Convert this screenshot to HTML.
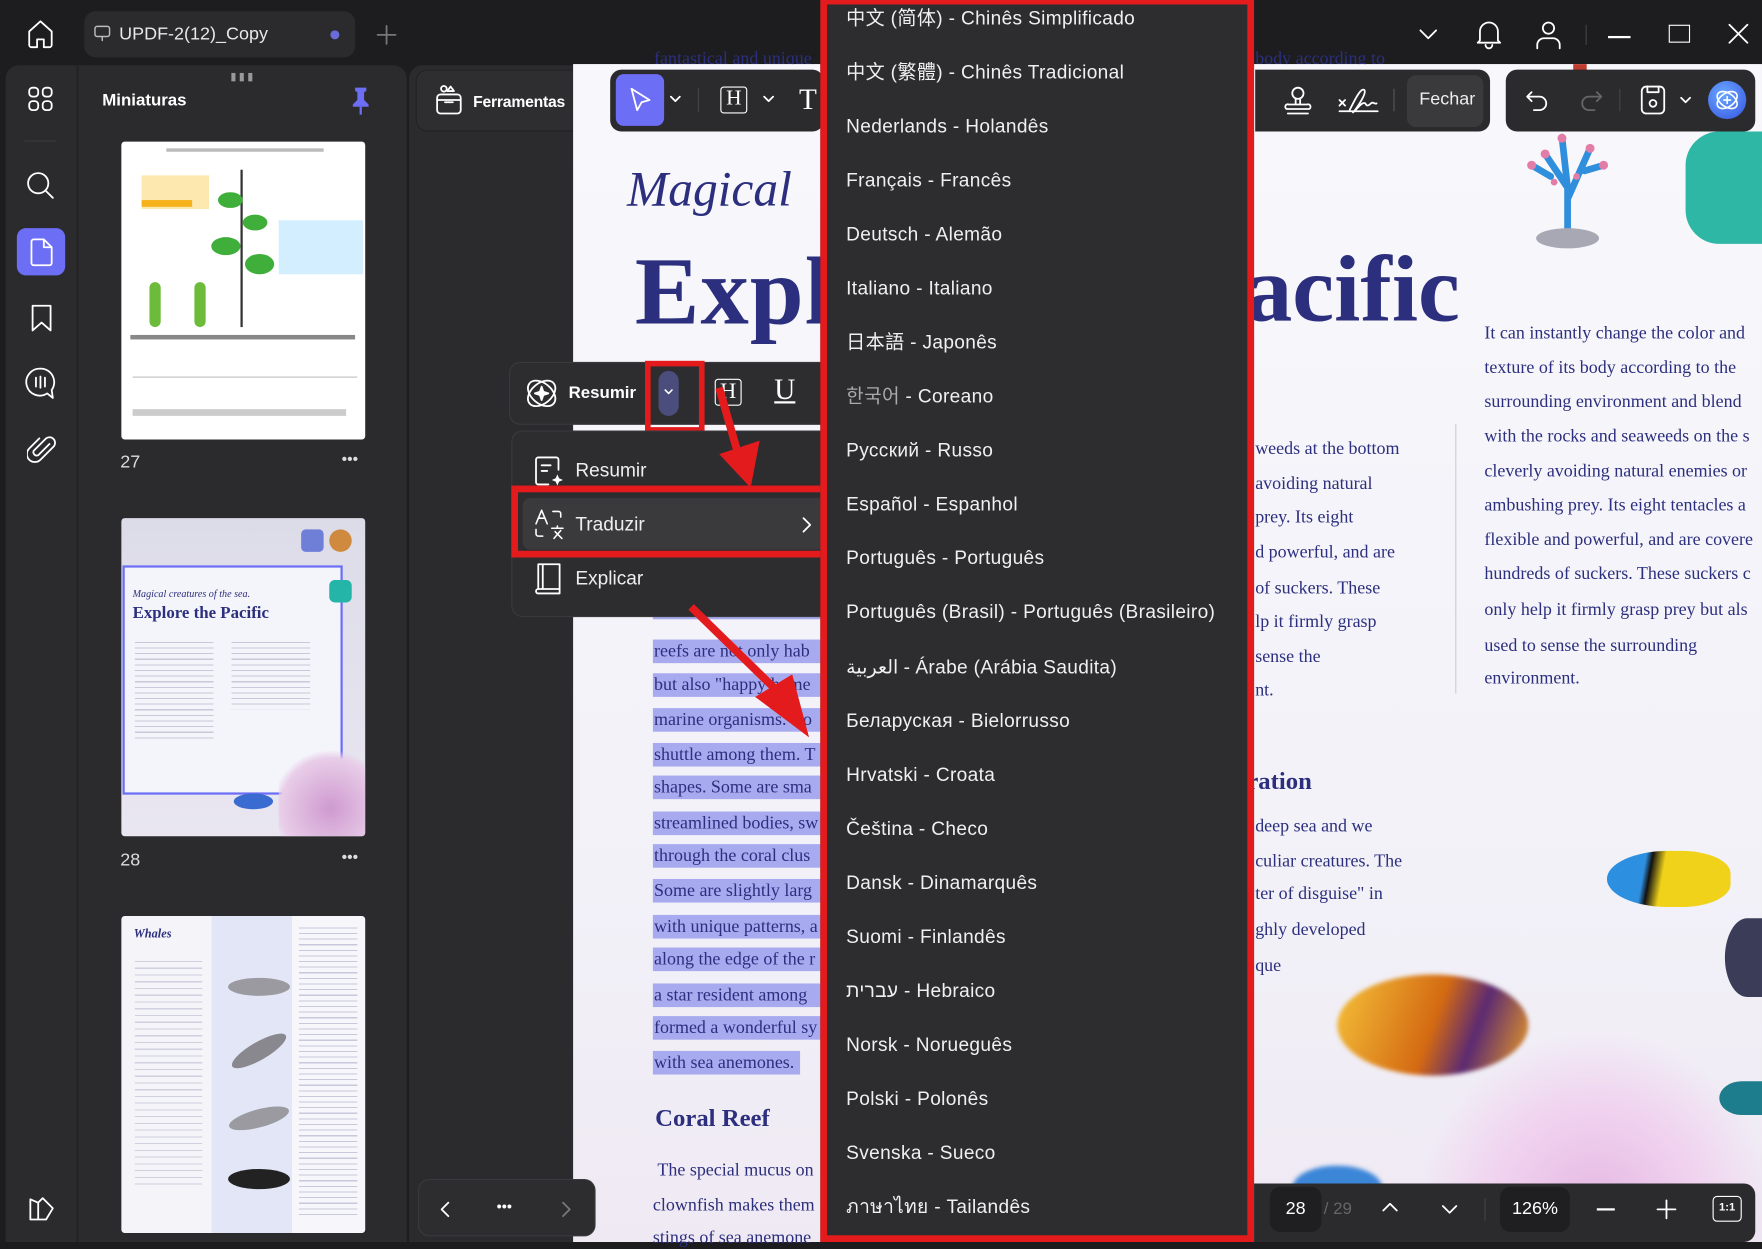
<!DOCTYPE html>
<html><head><meta charset="utf-8"><style>
*{margin:0;padding:0;box-sizing:border-box}
html,body{width:1762px;height:1242px;overflow:hidden;background:#1c1c1e}
#w{position:absolute;left:0;top:0;width:1568px;height:1105px;transform-origin:0 0;transform:scale(1.12372,1.12398);background:#1d1d1f;font-family:"Liberation Sans","Noto Sans CJK SC",sans-serif;color:#fff}
.a{position:absolute}
.ic{position:absolute;fill:none;stroke:#fff;stroke-width:1.6;stroke-linecap:round;stroke-linejoin:round}
.doc{font-family:"Liberation Serif",serif;color:#2c2f7e}
.sl{position:absolute;left:581px;height:21px;background:#a8aaf0;font-size:16px;line-height:21px;white-space:nowrap;overflow:hidden;font-family:"Liberation Serif",serif;color:#2c2f7e;padding-left:1px}
.rt{position:absolute;font-family:"Liberation Serif",serif;color:#2c2f7e;font-size:16px;white-space:nowrap}
.lang{position:absolute;left:753px;font-size:17px;line-height:22px;height:22px;color:#f0f0f0;white-space:nowrap;letter-spacing:.3px}
.mi{position:absolute;font-size:17px;color:#eee}
</style></head><body><div id="w">

<!-- top bar -->
<svg class="ic" style="left:22px;top:16px" width="28" height="28" viewBox="0 0 28 28"><path d="M4 12L14 3l10 9v12a2 2 0 0 1-2 2h-5v-7h-6v7H6a2 2 0 0 1-2-2z"/></svg>
<div class="a" style="left:75px;top:10px;width:241px;height:41px;background:#2b2b2e;border-radius:10px"></div>
<svg class="ic" style="left:83px;top:22px;stroke:#bbb;stroke-width:1.3" width="16" height="16" viewBox="0 0 16 16"><rect x="1.5" y="1.5" width="13" height="9" rx="2"/><path d="M8 11v3"/></svg>
<div class="a" style="left:106px;top:22px;font-size:16px;color:#e8e8e8">UPDF-2(12)_Copy</div>
<div class="a" style="left:294px;top:27px;width:8px;height:8px;border-radius:50%;background:#6a6cd8"></div>
<svg class="ic" style="left:335px;top:22px;stroke:#777" width="18" height="18" viewBox="0 0 18 18"><path d="M9 1v16M1 9h16"/></svg>
<svg class="ic" style="left:1262px;top:23px" width="18" height="14" viewBox="0 0 18 14"><path d="M2 4l7 7 7-7"/></svg>
<svg class="ic" style="left:1313px;top:17px" width="24" height="27" viewBox="0 0 24 27"><path d="M4 19V11a8 8 0 0 1 16 0v8l2 2H2z M9 23a3 3 0 0 0 6 0"/></svg>
<svg class="ic" style="left:1366px;top:17px" width="24" height="28" viewBox="0 0 24 28"><circle cx="12" cy="8" r="5"/><path d="M2 26v-3a6 6 0 0 1 6-6h8a6 6 0 0 1 6 6v3"/></svg>
<div class="a" style="left:1411px;top:22px;width:1px;height:18px;background:#444"></div>
<div class="a" style="left:1431px;top:32px;width:20px;height:1.6px;background:#fff"></div>
<div class="a" style="left:1485px;top:22px;width:19px;height:16px;border:1.6px solid #fff"></div>
<svg class="ic" style="left:1538px;top:21px" width="18" height="18" viewBox="0 0 18 18"><path d="M1 1l16 16M17 1L1 17"/></svg>

<!-- left panel -->
<div class="a" style="left:5px;top:58px;width:357px;height:1047px;background:#2b2b2d;border-radius:12px 12px 0 0"></div>
<div class="a" style="left:68px;top:58px;width:2px;height:1047px;background:#232325"></div>
<div class="a" style="left:205px;top:63px;font-size:10px;color:#999;letter-spacing:2px">▮▮▮</div>
<svg class="ic" style="left:24px;top:76px" width="24" height="24" viewBox="0 0 24 24"><rect x="2" y="2" width="8" height="8" rx="3"/><rect x="14" y="2" width="8" height="8" rx="3"/><rect x="2" y="14" width="8" height="8" rx="3"/><rect x="14" y="14" width="8" height="8" rx="3"/></svg>
<div class="a" style="left:22px;top:125px;width:28px;height:1px;background:#3b3b3d"></div>
<svg class="ic" style="left:23px;top:152px" width="26" height="26" viewBox="0 0 26 26"><circle cx="11" cy="11" r="9"/><path d="M18 18l6 6"/></svg>
<div class="a" style="left:15px;top:203px;width:43px;height:42px;background:#6c6ef5;border-radius:8px"></div>
<svg class="ic" style="left:25px;top:211px" width="24" height="27" viewBox="0 0 24 27"><path d="M5 2h9l7 7v14a2 2 0 0 1-2 2H5a2 2 0 0 1-2-2V4a2 2 0 0 1 2-2z M14 2v7h7"/></svg>
<svg class="ic" style="left:26px;top:270px" width="22" height="26" viewBox="0 0 22 26"><path d="M3 2h16v22l-8-7-8 7z"/></svg>
<svg class="ic" style="left:22px;top:326px" width="28" height="30" viewBox="0 0 28 30"><path d="M14 2a12 12 0 1 0 6 22l5 4-1-7A12 12 0 0 0 14 2z M10 10v8M14 9v10M18 10v8"/></svg>
<svg class="ic" style="left:24px;top:385px" width="26" height="30" viewBox="0 0 26 30"><path d="M20 10L10 20a3 3 0 0 1-4-4L17 5a5 5 0 0 1 7 7L12 24a7 7 0 0 1-10-10l9-9"/></svg>
<svg class="ic" style="left:24px;top:1063px" width="26" height="26" viewBox="0 0 26 26"><path d="M3 22V4l7 3 4-4 9 9-6 10z M10 7v15"/></svg>

<div class="a" style="left:91px;top:81px;font-size:15px;font-weight:bold">Miniaturas</div>
<svg class="a" style="left:312px;top:77px" width="18" height="26" viewBox="0 0 18 26"><path d="M4 1h10v3l-2 1v7l4 4v2H2v-2l4-4V5L4 4z" fill="#6c6ef5"/><path d="M9 18v7" stroke="#6c6ef5" stroke-width="2"/></svg>

<!-- thumbnails -->
<div class="a" style="left:108px;top:126px;width:217px;height:265px;background:#fff;border-radius:3px;overflow:hidden">
 <div class="a" style="left:40px;top:6px;width:140px;height:3px;background:#bbb"></div>
 <div class="a" style="left:18px;top:30px;width:60px;height:30px;background:#fde9b0"></div>
 <div class="a" style="left:18px;top:52px;width:45px;height:6px;background:#f6b21a"></div>
 <div class="a" style="left:140px;top:70px;width:75px;height:48px;background:#d3efff"></div>
 <div class="a" style="left:106px;top:25px;width:2px;height:140px;background:#333"></div>
 <div class="a" style="left:86px;top:45px;width:22px;height:14px;background:#3fae3a;border-radius:50%"></div>
 <div class="a" style="left:108px;top:65px;width:22px;height:14px;background:#3fae3a;border-radius:50%"></div>
 <div class="a" style="left:80px;top:85px;width:26px;height:16px;background:#3fae3a;border-radius:50%"></div>
 <div class="a" style="left:110px;top:100px;width:26px;height:18px;background:#3fae3a;border-radius:50%"></div>
 <div class="a" style="left:25px;top:125px;width:10px;height:40px;background:#6dbb3a;border-radius:5px"></div>
 <div class="a" style="left:65px;top:125px;width:10px;height:40px;background:#6dbb3a;border-radius:5px"></div>
 <div class="a" style="left:8px;top:172px;width:200px;height:4px;background:#888"></div>
 <div class="a" style="left:10px;top:185px;width:200px;height:25px;border-bottom:1px solid #999;opacity:.6"></div>
 <div class="a" style="left:10px;top:238px;width:190px;height:6px;background:#ccc"></div>
</div>
<div class="a" style="left:107px;top:403px;font-size:16px;color:#ddd">27</div>
<div class="a" style="left:304px;top:400px;font-size:14px;color:#ddd">•••</div>

<div class="a" style="left:108px;top:461px;width:217px;height:283px;background:linear-gradient(180deg,#dcdce8,#e9e6f1);border-radius:3px;overflow:hidden">
 <div class="a" style="left:1px;top:42px;width:196px;height:204px;border:2px solid #6c6ef5;background:#f4f4fb"></div>
 <div class="a doc" style="left:10px;top:62px;font-size:9px;font-style:italic">Magical creatures of the sea.</div>
 <div class="a doc" style="left:10px;top:77px;font-size:15px;font-weight:bold">Explore the Pacific</div>
 <div class="a" style="left:12px;top:110px;width:70px;height:90px;background:repeating-linear-gradient(#c9c9da 0 1px,transparent 1px 5px)"></div>
 <div class="a" style="left:98px;top:110px;width:70px;height:60px;background:repeating-linear-gradient(#c9c9da 0 1px,transparent 1px 5px)"></div>
 <div class="a" style="left:140px;top:200px;width:77px;height:83px;background:radial-gradient(circle at 60% 70%,#cf9ad0,#e8cde8 60%,transparent 70%)"></div>
 <div class="a" style="left:160px;top:10px;width:20px;height:20px;background:#6f7fd8;border-radius:4px"></div>
 <div class="a" style="left:185px;top:10px;width:20px;height:20px;background:#d08a40;border-radius:50%"></div>
 <div class="a" style="left:185px;top:55px;width:20px;height:20px;background:#25b5a8;border-radius:5px"></div>
 <div class="a" style="left:100px;top:245px;width:35px;height:14px;background:#3a6bd0;border-radius:50%"></div>
</div>
<div class="a" style="left:107px;top:757px;font-size:16px;color:#ddd">28</div>
<div class="a" style="left:304px;top:754px;font-size:14px;color:#ddd">•••</div>

<div class="a" style="left:108px;top:815px;width:217px;height:282px;background:linear-gradient(90deg,#f4f4f9 0 37%,#e2e6f6 37% 70%,#f6f6fb 70%);border-radius:3px;overflow:hidden">
 <div class="a doc" style="left:11px;top:10px;font-size:11px;font-weight:bold;font-style:italic">Whales</div>
 <div class="a" style="left:12px;top:40px;width:60px;height:200px;background:repeating-linear-gradient(#d0d0e0 0 1px,transparent 1px 6px)"></div>
 <div class="a" style="left:158px;top:10px;width:52px;height:260px;background:repeating-linear-gradient(#c8c8dc 0 1px,transparent 1px 5px)"></div>
 <div class="a" style="left:95px;top:55px;width:55px;height:16px;background:#9a9aa0;border-radius:50%"></div>
 <div class="a" style="left:95px;top:112px;width:55px;height:16px;background:#88888e;border-radius:50%;transform:rotate(-30deg)"></div>
 <div class="a" style="left:95px;top:172px;width:55px;height:16px;background:#9a9aa0;border-radius:50%;transform:rotate(-15deg)"></div>
 <div class="a" style="left:95px;top:225px;width:55px;height:18px;background:#222;border-radius:50%"></div>
</div>

<!-- middle gutter -->
<div class="a" style="left:364px;top:58px;width:146px;height:1047px;background:#2b2b2d;border-radius:12px 0 0 0"></div>
<div class="a" style="left:370px;top:62px;width:155px;height:55px;background:#2e2e30;border:1px solid #232325;border-radius:10px"></div>
<svg class="ic" style="left:386px;top:74px" width="27" height="29" viewBox="0 0 27 29"><rect x="3" y="10" width="21" height="17" rx="3"/><path d="M10 17h7M3 15h21"/><circle cx="9" cy="5" r="2.5"/><path d="M15 3l3 4h-6z"/></svg>
<div class="a" style="left:421px;top:82px;font-size:14px;font-weight:bold;letter-spacing:-.2px">Ferramentas</div>

<!-- document page -->
<div class="a" style="left:510px;top:57px;width:1058px;height:1048px;background:linear-gradient(180deg,#f8f8fc,#f2f1f8 70%,#efe9f3);overflow:hidden">
 <div class="a doc" style="left:48px;top:86px;font-size:44px;font-style:italic">Magical</div>
 <div class="a doc" style="left:55px;top:152px;font-size:86px;font-weight:bold;letter-spacing:1px">Expl</div>
 <div class="a doc" style="left:598px;top:152px;font-size:84px;font-weight:bold">acific</div>
 <div class="a" style="left:785px;top:320px;width:1px;height:240px;background:#ccd"></div>
 <div class="a doc" style="left:73px;top:925px;font-size:22px;font-weight:bold">Coral Reef</div>
 <div class="a doc" style="left:600px;top:625px;font-size:22px;font-weight:bold">ration</div>
 <!-- corals -->
 <svg class="a" style="left:845px;top:60px" width="80" height="105" viewBox="0 0 80 105"><g stroke="#2f8fdc" stroke-width="6" fill="none" stroke-linecap="round"><path d="M40 90V50L20 20M40 60L60 15M40 50L35 5M25 40L8 30M55 35L72 30"/></g><g fill="#e27da8"><circle cx="20" cy="20" r="4"/><circle cx="60" cy="15" r="4"/><circle cx="35" cy="6" r="4"/><circle cx="8" cy="30" r="4"/><circle cx="72" cy="30" r="4"/><circle cx="48" cy="40" r="3"/><circle cx="28" cy="45" r="3"/></g><ellipse cx="40" cy="95" rx="28" ry="9" fill="#a8a8b4"/></svg>
 <div class="a" style="left:990px;top:60px;width:68px;height:100px;background:#2fb7a5;border-radius:30px 0 0 30px"></div>
 <div class="a" style="left:890px;top:-5px;width:12px;height:12px;background:#c03b30"></div>
 <!-- fish and coral bottom -->
 <div class="a" style="left:920px;top:700px;width:110px;height:50px;background:linear-gradient(100deg,#2d8fe0 30%,#111 35%,#f0d21a 45%);border-radius:50% 40% 40% 50%"></div>
 <div class="a" style="left:1025px;top:760px;width:40px;height:70px;background:#3a3c58;border-radius:50% 0 0 50%"></div>
 <div class="a" style="left:680px;top:810px;width:170px;height:90px;background:linear-gradient(110deg,#f5c23a,#d46a12 50%,#5c2a72 70%,#f0a020);border-radius:50%;filter:blur(2px)"></div>
 <div class="a" style="left:750px;top:860px;width:320px;height:200px;background:radial-gradient(ellipse at 50% 80%,#e5b8e3 0,#f0d2ef 40%,transparent 70%)"></div>
 <div class="a" style="left:1020px;top:905px;width:40px;height:30px;background:#1e7d8c;border-radius:50% 0 0 50%"></div>
 <div class="a" style="left:640px;top:980px;width:80px;height:40px;background:#3c86d8;border-radius:50%;filter:blur(2px)"></div>
</div>

<!-- doc text left (selected) -->
<div class="sl" style="top:539px;width:150px;height:12px"></div>
<div class="sl" style="top:569px;width:150px">reefs are not only hab</div>
<div class="sl" style="top:599px;width:150px">but also "happy home</div>
<div class="sl" style="top:630px;width:150px">marine organisms. Co</div>
<div class="sl" style="top:661px;width:150px">shuttle among them. T</div>
<div class="sl" style="top:690px;width:150px">shapes. Some are sma</div>
<div class="sl" style="top:722px;width:150px">streamlined bodies, sw</div>
<div class="sl" style="top:751px;width:150px">through the coral clus</div>
<div class="sl" style="top:782px;width:150px">Some are slightly larg</div>
<div class="sl" style="top:814px;width:150px">with unique patterns, a</div>
<div class="sl" style="top:843px;width:150px">along the edge of the r</div>
<div class="sl" style="top:875px;width:150px">a star resident among</div>
<div class="sl" style="top:904px;width:150px">formed a wonderful sy</div>
<div class="sl" style="top:935px;width:131px">with sea anemones.</div>
<div class="rt" style="left:585px;top:1033px">The special mucus on</div>
<div class="rt" style="left:581px;top:1064px">clownfish makes them</div>
<div class="rt" style="left:581px;top:1093px">stings of sea anemone</div>
<div class="rt" style="left:582px;top:44px;font-size:16px;height:13px;overflow:hidden">fantastical and unique</div>
<div class="rt" style="left:1117px;top:44px;font-size:16px;height:13px;overflow:hidden">body according to</div>

<!-- doc text mid column -->
<div class="rt" style="left:1117px;top:391px">weeds at the bottom</div>
<div class="rt" style="left:1117px;top:422px">avoiding natural</div>
<div class="rt" style="left:1117px;top:452px">prey. Its eight</div>
<div class="rt" style="left:1117px;top:483px">d powerful, and are</div>
<div class="rt" style="left:1117px;top:515px">of suckers. These</div>
<div class="rt" style="left:1117px;top:545px">lp it firmly grasp</div>
<div class="rt" style="left:1117px;top:576px">sense the</div>
<div class="rt" style="left:1117px;top:606px">nt.</div>
<div class="rt" style="left:1117px;top:727px">deep sea and we</div>
<div class="rt" style="left:1117px;top:758px">culiar creatures. The</div>
<div class="rt" style="left:1117px;top:787px">ter of disguise" in</div>
<div class="rt" style="left:1117px;top:819px">ghly developed</div>
<div class="rt" style="left:1117px;top:851px">que</div>
<!-- right column -->
<div class="rt" style="left:1321px;top:288px">It can instantly change the color and</div>
<div class="rt" style="left:1321px;top:319px">texture of its body according to the</div>
<div class="rt" style="left:1321px;top:349px">surrounding environment and blend</div>
<div class="rt" style="left:1321px;top:380px">with the rocks and seaweeds on the s</div>
<div class="rt" style="left:1321px;top:411px">cleverly avoiding natural enemies or</div>
<div class="rt" style="left:1321px;top:441px">ambushing prey. Its eight tentacles a</div>
<div class="rt" style="left:1321px;top:472px">flexible and powerful, and are covere</div>
<div class="rt" style="left:1321px;top:502px">hundreds of suckers. These suckers c</div>
<div class="rt" style="left:1321px;top:534px">only help it firmly grasp prey but als</div>
<div class="rt" style="left:1321px;top:566px">used to sense the surrounding</div>
<div class="rt" style="left:1321px;top:595px">environment.</div>

<!-- top edit toolbar -->
<div class="a" style="left:543px;top:62px;width:190px;height:55px;background:#2b2b2d;border-radius:10px"></div>
<div class="a" style="left:548px;top:66px;width:43px;height:46px;background:#6c6ef5;border-radius:7px"></div>
<svg class="ic" style="left:558px;top:76px" width="24" height="26" viewBox="0 0 24 26"><path d="M4 3l16 10-7 2-4 7z"/></svg>
<svg class="ic" style="left:595px;top:84px" width="12" height="8" viewBox="0 0 12 8"><path d="M2 2l4 4 4-4"/></svg>
<div class="a" style="left:621px;top:78px;width:1px;height:22px;background:#444"></div>
<div class="a" style="left:641px;top:77px;width:24px;height:24px;border:1.6px solid #fff;border-radius:3px;font-size:19px;line-height:20px;text-align:center;font-family:'Liberation Serif',serif">H</div>
<svg class="ic" style="left:678px;top:84px" width="12" height="8" viewBox="0 0 12 8"><path d="M2 2l4 4 4-4"/></svg>
<div class="a" style="left:711px;top:74px;font-size:26px;font-family:'Liberation Serif',serif">T</div>

<!-- right toolbars -->
<div class="a" style="left:1117px;top:62px;width:209px;height:55px;background:#2b2b2d;border-radius:0 10px 10px 0"></div>
<svg class="ic" style="left:1142px;top:76px" width="26" height="28" viewBox="0 0 26 28"><circle cx="13" cy="7" r="5"/><path d="M11 12v5h4v-5M3 21a2 2 0 0 1 2-4h16a2 2 0 0 1 2 4zM4 25h18"/></svg>
<svg class="ic" style="left:1190px;top:76px" width="38" height="28" viewBox="0 0 38 28"><path d="M2 13l5 5M7 13l-5 5M11 22c5-10 10-20 13-18 3 3-8 18-10 20 4-3 8-10 11-8 1 2 2 3 5 0 2-2 3 1 5 0M2 23h34"/></svg>
<div class="a" style="left:1240px;top:79px;width:1px;height:20px;background:#555"></div>
<div class="a" style="left:1252px;top:67px;width:68px;height:46px;background:#3a3a3c;border-radius:8px"></div>
<div class="a" style="left:1263px;top:80px;font-size:16px;color:#eee">Fechar</div>
<div class="a" style="left:1340px;top:62px;width:222px;height:55px;background:#2b2b2d;border-radius:10px"></div>
<svg class="ic" style="left:1357px;top:79px" width="22" height="20" viewBox="0 0 22 20"><path d="M6 3L2 7l4 4M2 7h11a6 6 0 0 1 0 12H8"/></svg>
<svg class="ic" style="left:1405px;top:79px;stroke:#666" width="22" height="20" viewBox="0 0 22 20"><path d="M16 3l4 4-4 4M20 7H9a6 6 0 0 0 0 12h5"/></svg>
<div class="a" style="left:1441px;top:79px;width:1px;height:20px;background:#444"></div>
<svg class="ic" style="left:1459px;top:75px" width="24" height="28" viewBox="0 0 24 28"><rect x="2" y="2" width="20" height="24" rx="4"/><path d="M7 2v5h10V2"/><circle cx="12" cy="17" r="3"/></svg>
<svg class="ic" style="left:1494px;top:85px" width="12" height="8" viewBox="0 0 12 8"><path d="M2 2l4 4 4-4"/></svg>
<div class="a" style="left:1520px;top:72px;width:34px;height:34px;border-radius:50%;background:radial-gradient(circle at 40% 35%,#6aa8ff,#3553e0)"></div>
<svg class="ic" style="left:1525px;top:77px;stroke-width:1.4" width="24" height="24" viewBox="0 0 24 24"><ellipse cx="12" cy="12" rx="10" ry="6" transform="rotate(35 12 12)"/><ellipse cx="12" cy="12" rx="10" ry="6" transform="rotate(-35 12 12)"/><path d="M12 9v6M9 12h6"/></svg>

<!-- floating toolbar -->
<div class="a" style="left:453px;top:322px;width:290px;height:56px;background:#2d2d30;border:1px solid #3a3a3d;border-radius:10px"></div>
<svg class="ic" style="left:466px;top:334px" width="32" height="32" viewBox="0 0 32 32"><ellipse cx="16" cy="16" rx="14" ry="9" transform="rotate(40 16 16)"/><ellipse cx="16" cy="16" rx="14" ry="9" transform="rotate(-40 16 16)"/><path d="M16 10l1.5 4.5L22 16l-4.5 1.5L16 22l-1.5-4.5L10 16l4.5-1.5z" fill="#fff"/></svg>
<div class="a" style="left:506px;top:341px;font-size:15px;font-weight:bold">Resumir</div>
<div class="a" style="left:586px;top:330px;width:18px;height:40px;background:#4b4d7d;border-radius:9px"></div>
<svg class="ic" style="left:589px;top:344px;stroke-width:1.4" width="12" height="10" viewBox="0 0 12 10"><path d="M3 3l3 3 3-3"/></svg>
<div class="a" style="left:574px;top:321px;width:53px;height:64px;border:5px solid #e31b1d"></div>
<div class="a" style="left:636px;top:337px;width:24px;height:24px;border:1.6px solid #fff;border-radius:3px;font-size:20px;line-height:21px;text-align:center;font-family:'Liberation Serif',serif">H</div>
<div class="a" style="left:689px;top:332px;font-size:26px;font-family:'Liberation Serif',serif;text-decoration:underline">U</div>

<!-- dropdown menu -->
<div class="a" style="left:455px;top:383px;width:290px;height:166px;background:#2d2d30;border:1px solid #3a3a3d;border-radius:10px"></div>
<svg class="ic" style="left:474px;top:404px" width="30" height="30" viewBox="0 0 30 30"><path d="M14 27H5a2 2 0 0 1-2-2V5a2 2 0 0 1 2-2h16a2 2 0 0 1 2 2v9M8 10h8M8 15h5"/><path d="M22 18l1.5 3.5L27 23l-3.5 1.5L22 28l-1.5-3.5L17 23l3.5-1.5z" fill="#fff" stroke="none"/></svg>
<div class="mi" style="left:512px;top:409px">Resumir</div>
<div class="a" style="left:465px;top:443px;width:270px;height:46px;background:#3a3a3c;border-radius:7px"></div>
<svg class="ic" style="left:474px;top:452px;stroke-width:1.4" width="30" height="30" viewBox="0 0 30 30"><path d="M3 14l5-12 5 12M5 9h6M18 3h5a2 2 0 0 1 2 2v3M3 19v4a2 2 0 0 0 2 2h4M17 18h10M22 16v2M19 27l6-7M20 21l6 6"/></svg>
<div class="mi" style="left:512px;top:457px">Traduzir</div>
<svg class="ic" style="left:713px;top:459px" width="10" height="16" viewBox="0 0 10 16"><path d="M2 2l6 6-6 6"/></svg>
<div class="a" style="left:455px;top:432px;width:285px;height:64px;border:6px solid #e31b1d"></div>
<svg class="ic" style="left:474px;top:500px" width="28" height="30" viewBox="0 0 28 30"><path d="M5 2h19v22H5zM5 24a2 2 0 0 0 0 4h19v-4M9 2v22"/></svg>
<div class="mi" style="left:512px;top:505px">Explicar</div>

<!-- arrows -->
<svg class="a" style="left:560px;top:330px" width="200" height="360" viewBox="560 330 200 360"><path d="M640 345L660 415" stroke="#e31b1d" stroke-width="7"/><path d="M640 404L668 434L676 392z" fill="#e31b1d"/><path d="M615 540L695 618" stroke="#e31b1d" stroke-width="7"/><path d="M672 620L720 656L705 600z" fill="#e31b1d"/></svg>

<!-- language list -->
<div class="a" style="left:730px;top:0;width:386px;height:1105px;background:#2d2d30;border:6px solid #e31b1d;border-top:4px solid #e31b1d"></div>
<div class="lang" style="top:6px">中文 (简体) - Chinês Simplificado</div>
<div class="lang" style="top:54px">中文 (繁體) - Chinês Tradicional</div>
<div class="lang" style="top:102px">Nederlands - Holandês</div>
<div class="lang" style="top:150px">Français - Francês</div>
<div class="lang" style="top:198px">Deutsch - Alemão</div>
<div class="lang" style="top:246px">Italiano - Italiano</div>
<div class="lang" style="top:294px">日本語 - Japonês</div>
<div class="lang" style="top:342px"><span style="color:#aaa">한국어</span> - Coreano</div>
<div class="lang" style="top:390px">Русский - Russo</div>
<div class="lang" style="top:438px">Español - Espanhol</div>
<div class="lang" style="top:486px">Português - Português</div>
<div class="lang" style="top:534px">Português (Brasil) - Português (Brasileiro)</div>
<div class="lang" style="top:583px">العربية - Árabe (Arábia Saudita)</div>
<div class="lang" style="top:631px">Беларуская - Bielorrusso</div>
<div class="lang" style="top:679px">Hrvatski - Croata</div>
<div class="lang" style="top:727px">Čeština - Checo</div>
<div class="lang" style="top:775px">Dansk - Dinamarquês</div>
<div class="lang" style="top:823px">Suomi - Finlandês</div>
<div class="lang" style="top:871px">עברית - Hebraico</div>
<div class="lang" style="top:919px">Norsk - Norueguês</div>
<div class="lang" style="top:967px">Polski - Polonês</div>
<div class="lang" style="top:1015px">Svenska - Sueco</div>
<div class="lang" style="top:1063px">ภาษาไทย - Tailandês</div>

<!-- bottom nav -->
<div class="a" style="left:372px;top:1049px;width:158px;height:51px;background:#2d2d30;border:1px solid #3a3a3d;border-radius:10px"></div>
<svg class="ic" style="left:391px;top:1068px" width="10" height="16" viewBox="0 0 10 16"><path d="M8 2L2 8l6 6"/></svg>
<div class="a" style="left:442px;top:1066px;font-size:13px">•••</div>
<svg class="ic" style="left:499px;top:1068px;stroke:#777" width="10" height="16" viewBox="0 0 10 16"><path d="M2 2l6 6-6 6"/></svg>

<div class="a" style="left:1116px;top:1053px;width:446px;height:52px;background:#2b2b2d;border-radius:0 10px 10px 0"></div>
<div class="a" style="left:1130px;top:1056px;width:46px;height:40px;background:#1f1f21;border-radius:9px;font-size:16px;line-height:40px;text-align:center">28</div>
<div class="a" style="left:1178px;top:1067px;font-size:15px;color:#666">/ 29</div>
<svg class="ic" style="left:1228px;top:1068px" width="18" height="12" viewBox="0 0 18 12"><path d="M3 9l6-6 6 6"/></svg>
<svg class="ic" style="left:1281px;top:1070px" width="18" height="12" viewBox="0 0 18 12"><path d="M3 3l6 6 6-6"/></svg>
<div class="a" style="left:1321px;top:1066px;width:1px;height:20px;background:#444"></div>
<div class="a" style="left:1335px;top:1056px;width:62px;height:40px;background:#1f1f21;border-radius:9px;font-size:16px;line-height:40px;text-align:center">126%</div>
<div class="a" style="left:1421px;top:1075px;width:16px;height:1.6px;background:#fff"></div>
<svg class="ic" style="left:1474px;top:1067px" width="18" height="18" viewBox="0 0 18 18"><path d="M9 1v16M1 9h16"/></svg>
<div class="a" style="left:1524px;top:1064px;width:26px;height:23px;border:1.5px solid #fff;border-radius:4px;font-size:10px;font-weight:bold;line-height:20px;text-align:center">1:1</div>

</div></body></html>
